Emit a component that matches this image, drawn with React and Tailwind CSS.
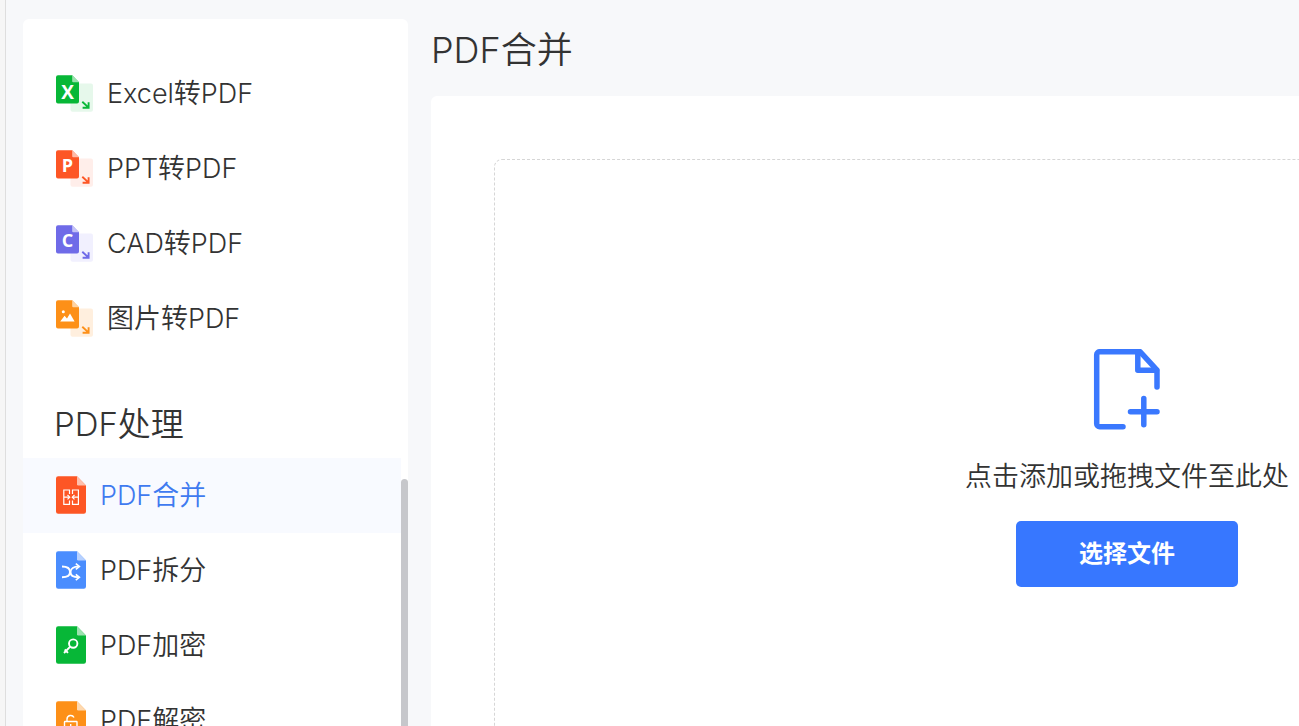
const FONT = "font-['Inter','Noto_Sans_CJK_SC',sans-serif] font-[350]";
const LETTER = "font-['Open_Sans',sans-serif] font-bold";

function ConvertIcon({ color, soft, fold, children }) {
  return (
    <svg width="37" height="37" viewBox="0 0 37 37" fill="none" className="shrink-0" aria-hidden="true">
      <rect x="14.5" y="8.6" width="22.500" height="28.200" rx="2" fill={soft} />
      <path d="M2 .2H16.2L23 7.2V26.6a2 2 0 0 1-2 2H2a2 2 0 0 1-2-2V2.200a2 2 0 0 1 2-2z" fill={color} />
      <path d="M16.2.2L23 7.200H17.200a1 1 0 0 1-1-1z" fill={fold} />
      {children}
      <path d="M26.300 26.800l6 5.600M32.600 27.200v5.500h-6" stroke={color} strokeWidth="1.900" />
    </svg>
  );
}

function DocIcon({ color, fold, children }) {
  return (
    <svg width="30" height="38" viewBox="0 0 30 38" fill="none" className="shrink-0" aria-hidden="true">
      <path d="M2.200.2H21L30 9.400V35.600a2.200 2.200 0 0 1-2.200 2.200H2.200A2.200 2.200 0 0 1 0 35.600V2.400A2.200 2.200 0 0 1 2.200.2z" fill={color} />
      <path d="M21 .2L30 9.400H22.200A1.200 1.200 0 0 1 21 8.200z" fill={fold} />
      {children}
    </svg>
  );
}

const convertItems = [
  {
    label: "Excel转PDF",
    icon: (
      <ConvertIcon color="#07b737" soft="#e6f8eb" fold="#9ce2af">
        <text x="11.5" y="23.500" textAnchor="middle" fontSize="19" fill="#fff" className={LETTER}>X</text>
      </ConvertIcon>
    ),
  },
  {
    label: "PPT转PDF",
    icon: (
      <ConvertIcon color="#fd5625" soft="#ffeeea" fold="#febba8">
        <text x="11.5" y="21.500" textAnchor="middle" fontSize="18" fill="#fff" className={LETTER}>P</text>
      </ConvertIcon>
    ),
  },
  {
    label: "CAD转PDF",
    icon: (
      <ConvertIcon color="#6f6be8" soft="#f1f0fe" fold="#c5c3f6">
        <text x="11.5" y="21.500" textAnchor="middle" fontSize="18" fill="#fff" className={LETTER}>C</text>
      </ConvertIcon>
    ),
  },
  {
    label: "图片转PDF",
    icon: (
      <ConvertIcon color="#fd9018" soft="#ffefde" fold="#fed3a3">
        <circle cx="7.300" cy="11.800" r="1.500" fill="#fff" />
        <path d="M4.200 21.500L8.600 15.800 11 18.500 14 13.400 18.600 21.500z" fill="#fff" />
      </ConvertIcon>
    ),
  },
];

const processItems = [
  {
    label: "PDF合并",
    active: true,
    icon: (
      <DocIcon color="#fd5625" fold="#fec0ad">
        <g stroke="#fff" strokeWidth="1.200">
          <path d="M13.500 18V14H7.800v14.400h5.700v-4M16.500 18V14h5.900v14.400h-5.900v-4M7.800 21.200h5.500M16.700 21.200h5.700" />
          <path d="M11.500 19l2.200 2.200-2.200 2.200M18.500 19l-2.200 2.200 2.200 2.200" />
        </g>
      </DocIcon>
    ),
  },
  {
    label: "PDF拆分",
    icon: (
      <DocIcon color="#4a8dfe" fold="#b7d1ff">
        <g stroke="#fff" strokeWidth="1.900">
          <path d="M6 15.500C11.500 15.500 14 17.500 14 21s-2.500 5.300-8 5.300" />
          <path d="M22.500 15.500C18 15.500 14.500 17.500 14.500 21s3.500 5.300 8 5.300" />
          <path d="M19.800 12.600l3.600 2.900-3.600 2.900M19.800 23.400l3.600 2.900-3.600 2.900" strokeWidth="1.600" />
        </g>
      </DocIcon>
    ),
  },
  {
    label: "PDF加密",
    icon: (
      <DocIcon color="#07b737" fold="#9ce2af">
        <g stroke="#fff" strokeWidth="1.900">
          <circle cx="17.200" cy="17.600" r="4.200" />
          <path d="M14.200 20.600L8 27M8.700 23.500l3.300 3.300" />
        </g>
      </DocIcon>
    ),
  },
  {
    label: "PDF解密",
    icon: (
      <DocIcon color="#fd9018" fold="#fed9b0">
        <g stroke="#fff" strokeWidth="1.400">
          <rect x="8.500" y="20.500" width="12.500" height="8.500" rx=".5" />
          <path d="M11 20.500v-2.500a3.700 3.700 0 0 1 7-1.500M14.700 23v3.500" />
        </g>
      </DocIcon>
    ),
  },
];

function NavItem({ item }) {
  return (
    <li>
      <a
        href="#"
        aria-current={item.active ? "page" : undefined}
        className={`flex h-[75px] items-center gap-[14px] pb-px pl-[33px] ${item.active ? "bg-[#f8faff] text-[#3f7af0]" : "text-[#333333]"}`}
      >
        {item.icon}
        <span className="whitespace-nowrap pt-[2px] leading-10">{item.label}</span>
      </a>
    </li>
  );
}

function AddFileIcon() {
  return (
    <svg width="68" height="82" viewBox="0 0 68 82" fill="none" stroke="#3a78fe" strokeWidth="5.500" strokeLinecap="round" strokeLinejoin="round" aria-hidden="true">
      <path d="M30 77.800H6.700A3 3 0 0 1 3.700 74.800V5.700A3 3 0 0 1 6.700 2.700H47L64 21.100V38" />
      <path d="M44.800 3.300V21.300H63.500" />
      <path d="M37.500 62.700H64M50.800 49.500V75.700" />
    </svg>
  );
}

export default function App() {
  return (
    <div className={`flex h-screen overflow-hidden bg-[#f7f8fa] ${FONT}`}>
      <div className="w-[6px] shrink-0 border-r border-[#dedede] bg-[#f6f6f6]" />
      <aside className="mt-[19px] ml-[17px] flex w-[385px] shrink-0 overflow-hidden rounded-t-md bg-white text-[27px]">
        <nav className="min-w-0 grow pt-[37px]" aria-label="PDF工具">
          <ul>
            {convertItems.map((item) => (
              <NavItem key={item.label} item={item} />
            ))}
          </ul>
          <h2 className="mt-11 mb-[10px] pl-[31px] text-[33px] leading-[48px] text-[#333333]">PDF处理</h2>
          <ul>
            {processItems.map((item) => (
              <NavItem key={item.label} item={item} />
            ))}
          </ul>
        </nav>
        <div className="flex w-[7px] shrink-0 flex-col pt-[460px]">
          <div className="grow rounded-t-full bg-[#c6c7cb]" />
        </div>
      </aside>
      <main className="ml-[23px] flex min-w-[1392px] grow flex-col">
        <h1 className="flex h-24 items-center pt-[3px] text-[36px] text-[#333333]">PDF合并</h1>
        <section className="flex grow flex-col rounded-t-md bg-white px-[63px] pt-[63px]">
          <div className="-mb-2 flex grow flex-col items-center rounded-lg border border-dashed border-[#d6d6d6] pt-[189px]">
            <AddFileIcon />
            <p className="mt-[26px] text-[27px] leading-10 text-[#333333]">点击添加或拖拽文件至此处</p>
            <button type="button" className="mt-6 h-[66px] w-[222px] rounded-[5px] bg-[#3777ff] text-2xl font-bold text-white">
              选择文件
            </button>
          </div>
        </section>
      </main>
    </div>
  );
}
